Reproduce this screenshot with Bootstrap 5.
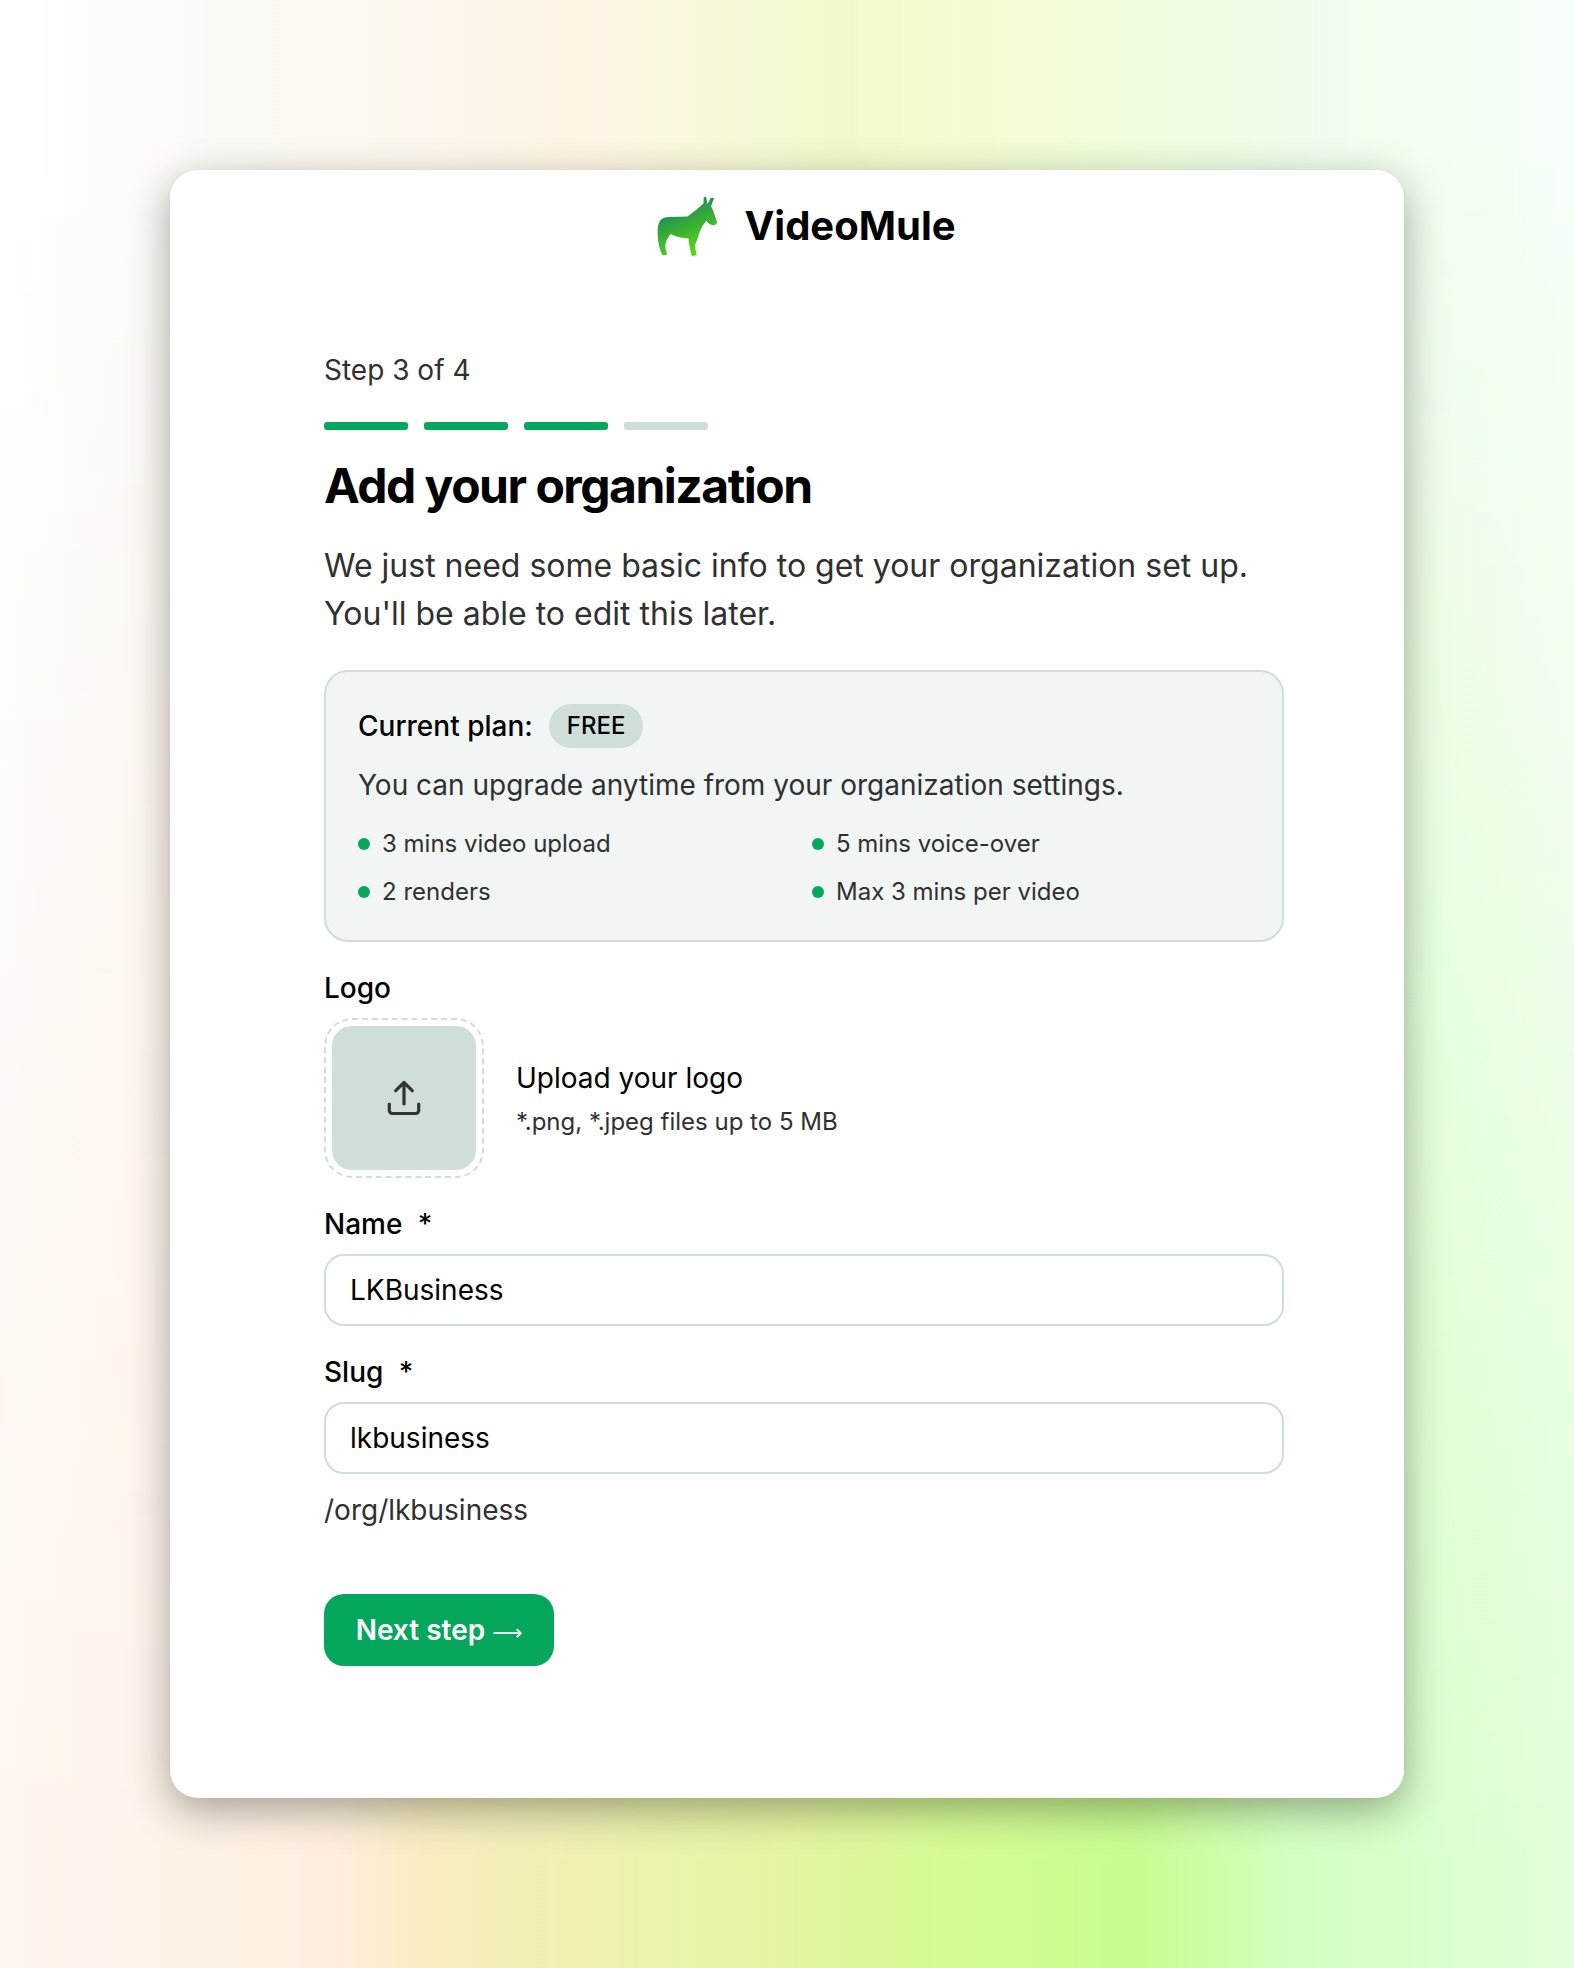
<!DOCTYPE html>
<html lang="en">
<head>
    <meta charset="UTF-8">
    <title>VideoMule - Add your organization</title>
    <link href="https://cdn.jsdelivr.net/npm/bootstrap@5.3.3/dist/css/bootstrap.min.css" rel="stylesheet">
    <style>
        body {
            min-height: 1968px;
            font-family: Inter, "Liberation Sans", sans-serif;
            color: #303030;
            padding: 170px;
            position: relative;
            background: linear-gradient(90deg, #ffffff 0%, #fdf9f5 15%, #fdf6e6 38%, #f3f9cd 53%, #f2fdd5 65%, #effde9 80%, #f8fff9 100%);
        }
        /* lower half of the backdrop fades in over the top colours */
        body::before {
            content: "";
            position: absolute;
            inset: 0;
            z-index: -1;
            background: linear-gradient(90deg, #fff6f0 0%, #feefe0 21%, #f8edc0 27%, #e6f4a3 48%, #d6fb94 60%, #c8fd90 72%, #d3ffc0 82%, #e3fedb 100%);
            -webkit-mask-image: linear-gradient(180deg, rgba(0,0,0,0) 7%, rgba(0,0,0,.45) 45%, #000 95%);
            mask-image: linear-gradient(180deg, rgba(0,0,0,0) 7%, rgba(0,0,0,.45) 45%, #000 95%);
        }
        .onboard-card {
            border: 0;
            border-radius: 28px;
            height: 1628px;
            padding: 24px 120px 0 154px;
            box-shadow: 0 12px 40px rgba(20, 25, 15, .38);
        }
        .brand-row { height: 64px; padding-left: 4px; gap: 25px; }
        .brand-name { font-size: 40px; font-weight: 700; color: #000; }
        .step-text { font-size: 28px; line-height: 40px; margin-top: 92px; }
        .step-bars { margin-top: 32px; }
        .step-bar { width: 84px; height: 8px; border-radius: 3px; background: #05a75c; }
        .step-bar-off { background: #cfdfd8; }
        .page-title { font-size: 48px; line-height: 60px; font-weight: 700; color: #000; letter-spacing: -1.5px; margin: 26px 0 26px; }
        .page-lead { font-size: 32px; line-height: 48px; margin-bottom: 32px; }
        .plan-box { background: #f1f5f4; border: 2px solid #cfdfd8; border-radius: 24px; padding: 32px; height: 272px; margin-bottom: 26px; }
        .plan-name { font-size: 28px; font-weight: 500; color: #000; }
        .plan-pill { background: #cfdfd8; color: #000; font-size: 24px; font-weight: 500; height: 44px; padding: 0 18px; border-radius: 22px; display: flex; align-items: center; }
        .plan-note { font-size: 28px; line-height: 40px; margin: 17px 0 15px; }
        .plan-item { font-size: 24px; line-height: 48px; gap: 12px; }
        .plan-dot { width: 12px; height: 12px; border-radius: 50%; background: #05a75c; }
        .field-label { font-size: 28px; line-height: 40px; font-weight: 500; color: #000; margin-bottom: 10px; }
        .field-star { margin-left: 8px; }
        .logo-row { margin-bottom: 26px; gap: 32px; }
        .logo-drop { width: 160px; height: 160px; padding: 6px; border: 2px dashed #cfdfd8; border-radius: 28px; }
        .logo-drop-inner { background: #cfdfd8; border-radius: 20px; }
        .logo-title { font-size: 28px; color: #000; margin-bottom: 5px; }
        .logo-hint { font-size: 24px; }
        .onboard-input.form-control { height: 72px; border: 2px solid #cfdfd8; border-radius: 20px; font-size: 28px; padding: 0 24px; color: #000; }
        .name-input { margin-bottom: 26px; }
        .slug-hint { font-size: 28px; line-height: 40px; margin-top: 16px; }
        .next-btn.btn { background: #05a75c; border: 0; color: #fff; width: 230px; height: 72px; border-radius: 20px; font-size: 28px; font-weight: 600; padding: 0; margin-top: 64px; }
        .next-arrow { font-family: "DejaVu Sans", sans-serif; font-weight: 400; font-size: 21px; }
    </style>
</head>
<body>
<div class="card onboard-card">
    <div class="d-flex align-items-center justify-content-center brand-row">
        <svg width="63" height="62" viewBox="110 75 190 185" aria-hidden="true">
            <defs>
                <linearGradient id="muleFill" x1="0.2" y1="0.1" x2="0.6" y2="1">
                    <stop offset="0.15" stop-color="#1f8f52"/>
                    <stop offset="1" stop-color="#5edb0c"/>
                </linearGradient>
            </defs>
            <path fill="url(#muleFill)" d="M253 100 L254 82 Q258 76 262 82 L265 102 L274 84 Q280 80 285 84 L276 108 Q283 118 287 135 L294 154 Q294 164 284 165 Q272 166 262 152 Q250 165 242 185 Q236 205 228 225 Q228 240 233 256 L218 258 Q212 240 208 205 Q180 205 155 192 Q142 205 138 225 Q138 240 144 254 L130 256 Q118 235 116 205 Q112 170 122 152 Q130 140 150 140 L205 139 Q230 122 253 100 Z"/>
        </svg>
        <span class="brand-name">VideoMule</span>
    </div>

    <div class="step-text">Step 3 of 4</div>
    <div class="d-flex gap-3 step-bars">
        <div class="step-bar"></div>
        <div class="step-bar"></div>
        <div class="step-bar"></div>
        <div class="step-bar step-bar-off"></div>
    </div>
    <h1 class="page-title">Add your organization</h1>
    <p class="page-lead">We just need some basic info to get your organization set up.<br>You'll be able to edit this later.</p>

    <!-- plan -->
    <div class="plan-box">
        <div class="d-flex align-items-center gap-3">
            <span class="plan-name">Current plan:</span>
            <span class="plan-pill">FREE</span>
        </div>
        <div class="plan-note">You can upgrade anytime from your organization settings.</div>
        <div class="row gx-3 gy-0">
            <div class="col-6 d-flex align-items-center plan-item"><span class="plan-dot"></span>3 mins video upload</div>
            <div class="col-6 d-flex align-items-center plan-item"><span class="plan-dot"></span>5 mins voice-over</div>
            <div class="col-6 d-flex align-items-center plan-item"><span class="plan-dot"></span>2 renders</div>
            <div class="col-6 d-flex align-items-center plan-item"><span class="plan-dot"></span>Max 3 mins per video</div>
        </div>
    </div>

    <div class="field-label">Logo</div>
    <div class="d-flex align-items-center logo-row">
        <div class="logo-drop flex-shrink-0">
            <div class="logo-drop-inner w-100 h-100 d-flex align-items-center justify-content-center">
                <svg width="36" height="36" viewBox="0 0 36 36" fill="none" stroke="#333" stroke-width="3.2" stroke-linecap="round" stroke-linejoin="round" aria-hidden="true">
                    <path d="M18 24V2.5M9.7 10.7 18 2.5l8.3 8.2M3.3 24v6.5a3 3 0 0 0 3 3h23.4a3 3 0 0 0 3-3V24"/>
                </svg>
            </div>
        </div>
        <div>
            <div class="logo-title">Upload your logo</div>
            <div class="logo-hint">*.png, *.jpeg files up to 5 MB</div>
        </div>
    </div>

    <div class="field-label">Name <span class="field-star">*</span></div>
    <input class="form-control onboard-input name-input" type="text" value="LKBusiness">
    <div class="field-label">Slug <span class="field-star">*</span></div>
    <input class="form-control onboard-input" type="text" value="lkbusiness">
    <div class="slug-hint">/org/lkbusiness</div>
    <div><button type="button" class="btn next-btn">Next step <span class="next-arrow">⟶</span></button></div>
</div>
<script src="https://cdn.jsdelivr.net/npm/bootstrap@5.3.3/dist/js/bootstrap.bundle.min.js"></script>
</body>
</html>
